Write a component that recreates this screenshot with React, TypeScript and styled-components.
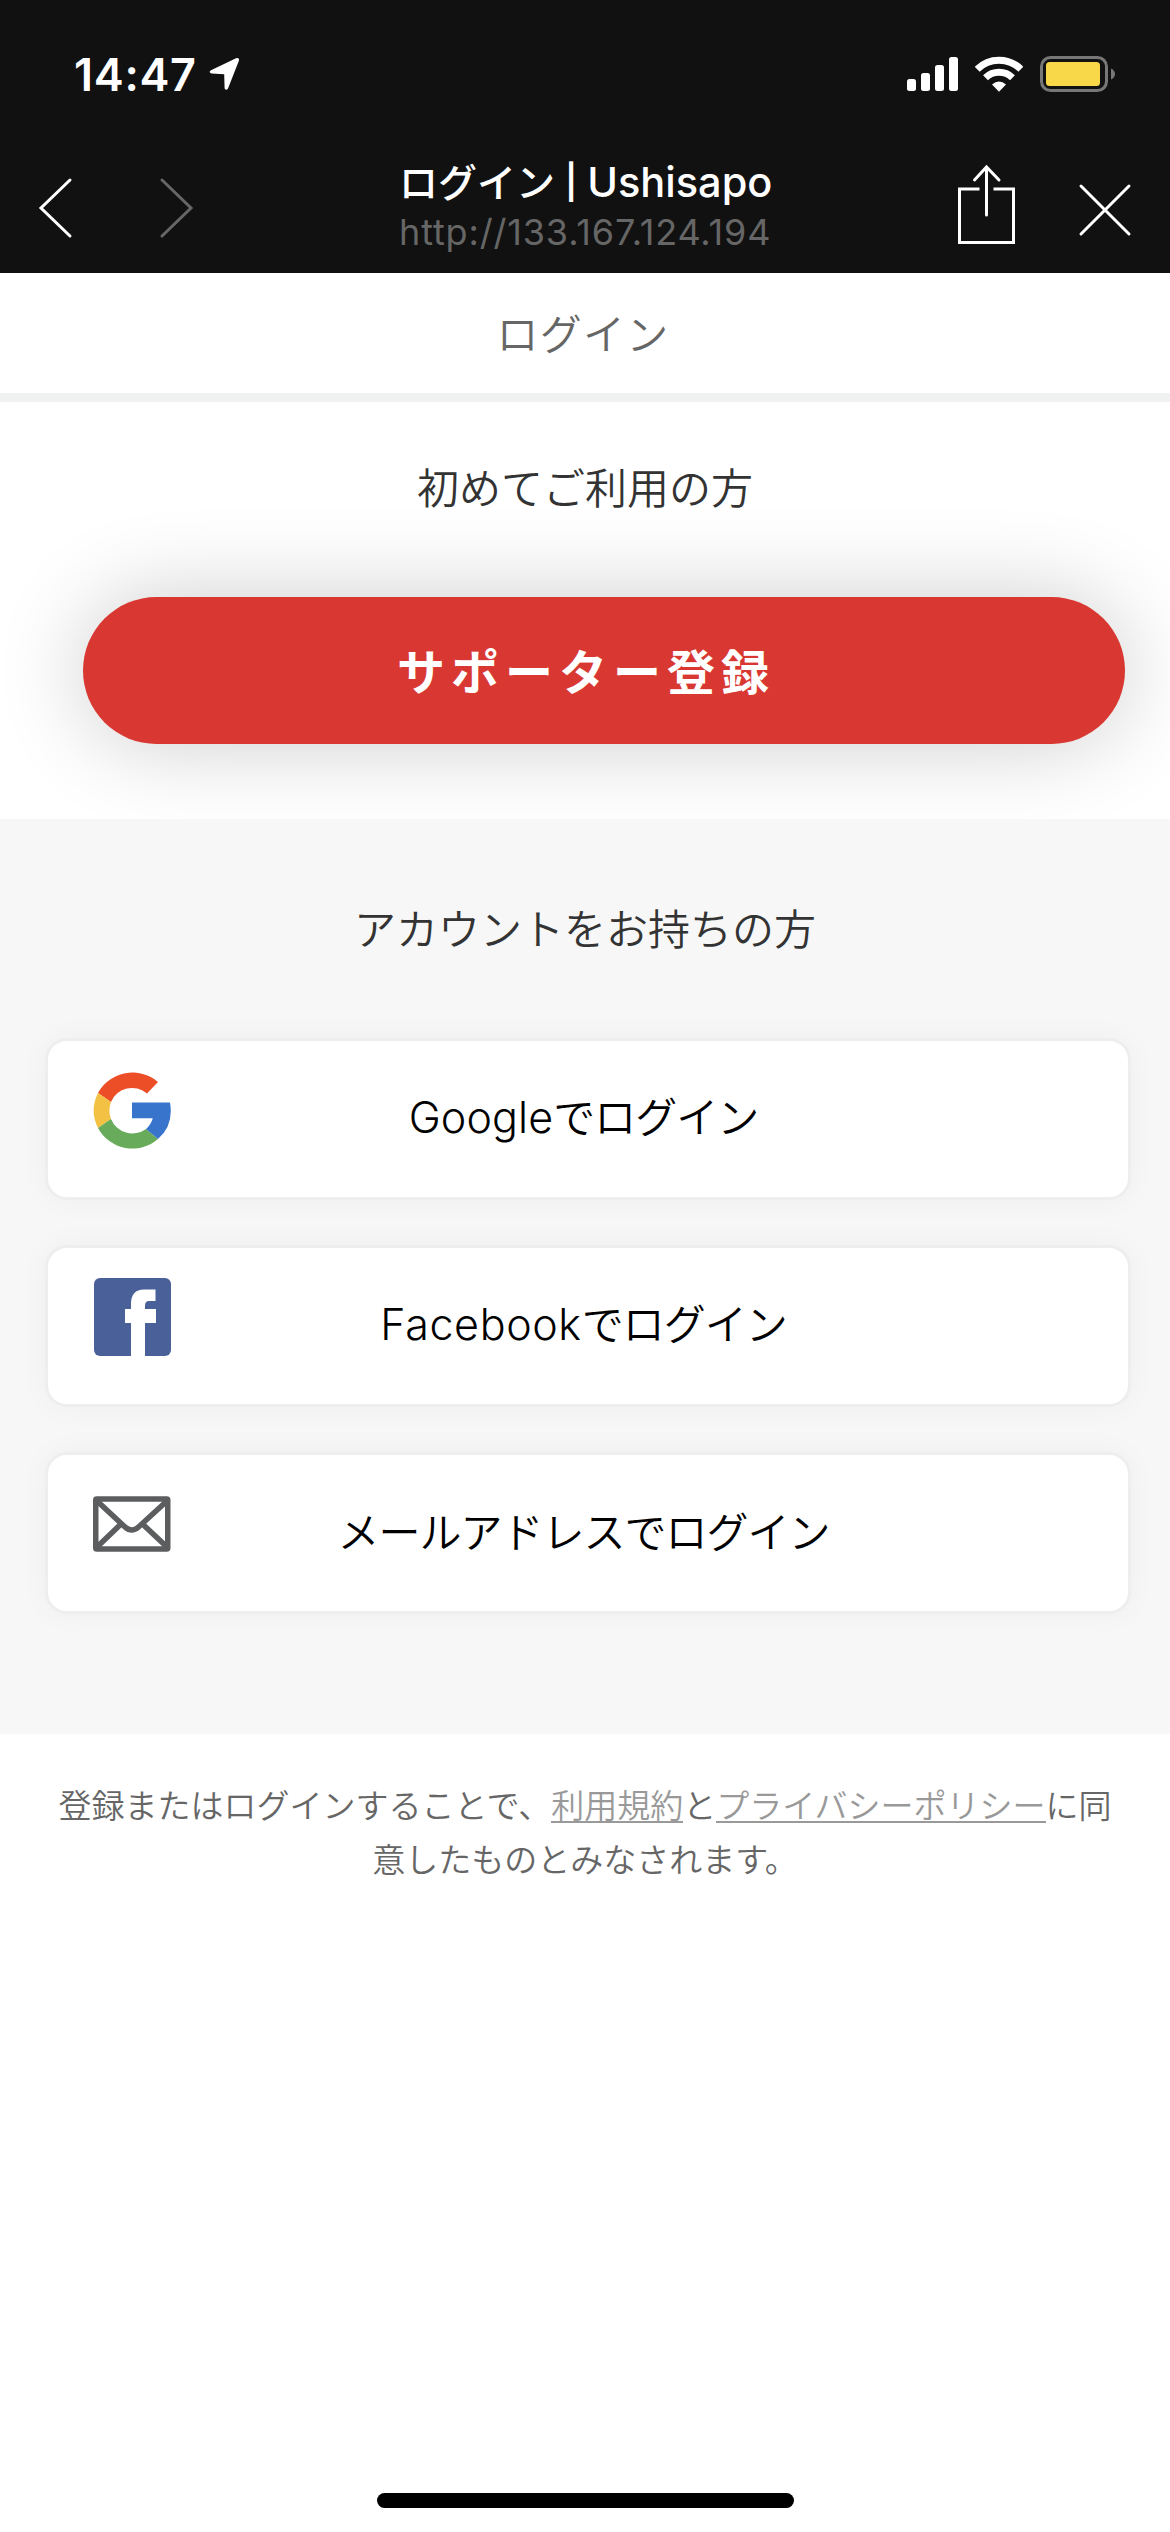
import React from "react";
import styled, { createGlobalStyle } from "styled-components";

const jp = `"Noto Sans CJK JP", sans-serif`;
const latin = `Inter, "Noto Sans CJK JP", sans-serif`;

const GlobalStyle = createGlobalStyle`
  *, *::before, *::after { box-sizing: border-box; }
  html, body { margin: 0; padding: 0; background: #fff; }
  svg { display: block; flex: none; }
`;

const Screen = styled.div`
  display: flex;
  flex-direction: column;
  width: 1170px;
  height: 2532px;
  overflow: hidden;
  background: #fff;
  font-family: ${jp};
`;

const TopChrome = styled.header`
  display: flex;
  flex-direction: column;
  height: 273px;
  flex: none;
  background: #111;
  color: #fff;
`;

const StatusBar = styled.div`
  display: flex;
  align-items: center;
  justify-content: space-between;
  height: 148px;
  padding: 0 55px 0 74px;
`;

const StatusGroup = styled.div<{ $gap: number }>`
  display: flex;
  align-items: center;
  gap: ${(p) => p.$gap}px;
`;

const Clock = styled.span`
  font: 600 45px/54px ${latin};
  letter-spacing: 0.7px;
  padding-top: 1px;
`;

const BrowserBar = styled.nav`
  display: flex;
  align-items: flex-start;
  justify-content: space-between;
  height: 125px;
  padding: 0 37px;
`;

const NavButtons = styled.div`
  display: flex;
  gap: 86px;
  padding-top: 29px;
  width: 270px;
`;

const ActionButtons = styled.div`
  display: flex;
  justify-content: flex-end;
  gap: 61px;
  padding-top: 15px;
  width: 270px;
`;

const PageInfo = styled.div`
  display: flex;
  flex-direction: column;
  align-items: flex-start;
  width: 372px;
  white-space: nowrap;
  padding-top: 9px;
`;

const PageTitle = styled.div`
  display: flex;
  align-items: center;
  height: 50px;
  font: 500 41.5px/50px ${latin};
`;

const TitleKana = styled.span`
  margin-bottom: 5px;
  font: 500 39px/50px ${jp};
`;

const TitleDivider = styled.span`
  margin: 0 10px 0 10px;
  font: 600 34px/50px ${latin};
`;

const PageUrl = styled.div`
  font: 400 36px/50px ${latin};
  letter-spacing: 0.85px;
  color: #666;
`;

const ScreenTitle = styled.h1`
  margin: 0;
  padding-right: 4px;
  flex: none;
  height: 129px;
  border-bottom: 9px solid #f0f2f2;
  font: 350 42px/118px ${jp};
  letter-spacing: 1.2px;
  text-align: center;
  color: #666;
`;

const Section = styled.section<{ $height: number; $top: number; $muted?: boolean }>`
  position: relative;
  display: flex;
  flex-direction: column;
  flex: none;
  height: ${(p) => p.$height}px;
  padding-top: ${(p) => p.$top}px;
  background: ${(p) => (p.$muted ? "#f7f7f7" : "#fff")};
`;

const Heading = styled.h2`
  margin: 0 0 81px;
  font: 350 42px/60px ${jp};
  text-align: center;
  color: #333;
`;

const RegisterButton = styled.button`
  width: 1042px;
  height: 147px;
  margin-left: 83px;
  padding: 0 36px 3px 0;
  border: 0;
  border-radius: 74px;
  background: #d93832;
  box-shadow: 0 0 90px rgba(0, 0, 0, 0.2);
  color: #fff;
  font: 700 48px/60px ${jp};
  letter-spacing: 6px;
`;

const LoginList = styled.div`
  display: flex;
  flex-direction: column;
  gap: 45px;
  padding: 0 39px 0 45px;
`;

const LoginCard = styled.button`
  display: flex;
  align-items: center;
  height: 162px;
  padding: 0 132px 0 45px;
  border: 3px solid #eee;
  border-radius: 22px;
  background: #fff;
  box-shadow: 0 0 30px rgba(0, 0, 0, 0.04);
`;

const CardIcon = styled.span`
  display: flex;
  width: 78px;
  margin-bottom: 18px;
`;

const CardLabel = styled.span`
  flex: 1;
  margin-bottom: 6px;
  font: 350 42px/60px ${jp};
  letter-spacing: -1px;
  text-align: center;
  color: #000;
`;

const Brand = styled.span<{ $tracking: number }>`
  font: 300 43px/60px ${latin};
  letter-spacing: ${(p) => p.$tracking}px;
`;

const Terms = styled.p`
  margin: 0;
  padding: 43px 0 0;
  font: 350 33px/54px ${jp};
  text-align: center;
  color: #666;
`;

const TermsLine = styled.span`
  display: block;
  white-space: nowrap;
`;

const TermsLink = styled.a`
  color: #999;
  border-bottom: 2px solid #999;
  line-height: 34px;
  display: inline-block;
`;

const HomeIndicator = styled.div`
  width: 417px;
  height: 15px;
  margin: auto auto 24px;
  border-radius: 8px;
  background: #000;
`;

const LocationIcon = () => (
  <svg width="31" height="34" viewBox="0 0 31 34">
    <path d="M2 13.2 27 1.2Q30.8 0 29.800 4L19 31.500Q17.300 34 15.600 31.500L15.200 17.200 2.500 16.600Q-1 15.500 2 13.200Z" fill="#fff" />
  </svg>
);

const SignalIcon = () => (
  <svg width="51" height="35" viewBox="0 0 51 35" fill="#fff">
    <rect x="0" y="22" width="9" height="12" rx="2.500" />
    <rect x="14" y="16" width="9" height="18" rx="2.500" />
    <rect x="28" y="8" width="9" height="26" rx="2.500" />
    <rect x="42" y="0" width="9" height="34" rx="2.500" />
  </svg>
);

const WifiIcon = () => (
  <svg width="50" height="36" viewBox="0 0 50 36">
    <g fill="none" stroke="#fff" strokeWidth="7">
      <path d="M3.200 13.200A31 31 0 0 1 46.800 13.200" />
      <path d="M11.500 21.800A19.500 19.500 0 0 1 38.500 21.800" />
    </g>
    <path d="M18 28.500Q25 22.500 32 28.500L25 35.800Z" fill="#fff" />
  </svg>
);

const BatteryIcon = () => (
  <svg width="75" height="36" viewBox="0 0 75 36">
    <rect x="1.500" y="1.500" width="65" height="33" rx="9" fill="none" stroke="#777" strokeWidth="3" />
    <rect x="6" y="6" width="54" height="24" rx="3.500" fill="#f8d749" />
    <path d="M71 12.500Q75 14.500 75 18T71 23.500Z" fill="#777" />
  </svg>
);

const Chevron = ({ forward = false }: { forward?: boolean }) => (
  <svg width="36" height="62" viewBox="0 0 36 62" fill="none" stroke={forward ? "#666" : "#fff"} strokeWidth="3" strokeLinecap="round">
    <path d={forward ? "M3 3 32 31 3 59" : "M33 3 4 31 33 59"} />
  </svg>
);

const ShareIcon = () => (
  <svg width="58" height="82" viewBox="0 0 58 82" fill="none" stroke="#fff" strokeWidth="3">
    <path d="M21.500 26H1.500V79.500H55.500V26H35.500" />
    <path d="M28.500 4V52M16.500 17 28.500 4 41 17" strokeLinecap="round" />
  </svg>
);

const CloseGlyph = styled.svg`
  margin-top: 19px;
`;

const CloseIcon = () => (
  <CloseGlyph width="56" height="56" viewBox="0 0 56 56" fill="none" stroke="#fff" strokeWidth="3" strokeLinecap="round">
    <path d="M4 4 52 52M52 4 4 52" />
  </CloseGlyph>
);

const GoogleIcon = () => (
  <svg width="78" height="79" viewBox="0 0 78 79">
    <path d="M5 22A39.200 39.200 0 0 1 65 11L54 22.500A22.800 22.800 0 0 0 18 31Z" fill="#ec4f27" />
    <path d="M5 22 18 31A24 24 0 0 0 18 48L5 57A39 39 0 0 1 5 22Z" fill="#f3c244" />
    <path d="M5 57 18 48A23 23 0 0 0 53 58L65 68A39 39 0 0 1 5 57Z" fill="#68ac5b" />
    <path d="M39 31.500H77Q81 54 65 68L53 58Q58 53.500 59.800 47.200H39Z" fill="#3874cc" />
  </svg>
);

const FacebookIcon = () => (
  <svg width="78" height="78" viewBox="0 0 78 78">
    <rect x="1" y="0" width="77" height="78" rx="6" fill="#4a6098" />
    <path d="M38 78V45H32V31H38V26Q38 11.500 51 11.500H62.500V23H56Q52 23 52 28V31H63V45H52V78Z" fill="#fff" />
  </svg>
);

const MailIcon = () => (
  <svg width="78" height="56" viewBox="0 0 78 56" fill="none" stroke="#5b5d5f" strokeWidth="5.500">
    <rect x="2.750" y="3" width="72" height="50" rx="1" />
    <path d="M3 4 32 31Q38.700 37 45.500 31L75 4M3 52 28 28M75 52 49.500 28" />
  </svg>
);

export default function App() {
  return (
    <>
      <GlobalStyle />
      <Screen>
        <TopChrome>
          <StatusBar>
            <StatusGroup $gap={12}>
              <Clock>14:47</Clock>
              <LocationIcon />
            </StatusGroup>
            <StatusGroup $gap={16}>
              <SignalIcon />
              <WifiIcon />
              <BatteryIcon />
            </StatusGroup>
          </StatusBar>
          <BrowserBar>
            <NavButtons>
              <Chevron />
              <Chevron forward />
            </NavButtons>
            <PageInfo>
              <PageTitle>
                <TitleKana>ログイン</TitleKana>
                <TitleDivider>|</TitleDivider>
                <span>Ushisapo</span>
              </PageTitle>
              <PageUrl>http://133.167.124.194</PageUrl>
            </PageInfo>
            <ActionButtons>
              <ShareIcon />
              <CloseIcon />
            </ActionButtons>
          </BrowserBar>
        </TopChrome>
        <ScreenTitle>ログイン</ScreenTitle>
        <Section $height={417} $top={54}>
          <Heading>初めてご利用の方</Heading>
          <RegisterButton>サポーター登録</RegisterButton>
        </Section>
        <Section $height={915} $top={78} $muted>
          <Heading>アカウントをお持ちの方</Heading>
          <LoginList>
            <LoginCard>
              <CardIcon><GoogleIcon /></CardIcon>
              <CardLabel><Brand $tracking={0.1}>Google</Brand>でログイン</CardLabel>
            </LoginCard>
            <LoginCard>
              <CardIcon><FacebookIcon /></CardIcon>
              <CardLabel><Brand $tracking={0.6}>Facebook</Brand>でログイン</CardLabel>
            </LoginCard>
            <LoginCard>
              <CardIcon><MailIcon /></CardIcon>
              <CardLabel>メールアドレスでログイン</CardLabel>
            </LoginCard>
          </LoginList>
        </Section>
        <Terms>
          <TermsLine>
            登録またはログインすることで、<TermsLink>利用規約</TermsLink>と<TermsLink>プライバシーポリシー</TermsLink>に同
          </TermsLine>
          <TermsLine>意したものとみなされます。</TermsLine>
        </Terms>
        <HomeIndicator />
      </Screen>
    </>
  );
}
